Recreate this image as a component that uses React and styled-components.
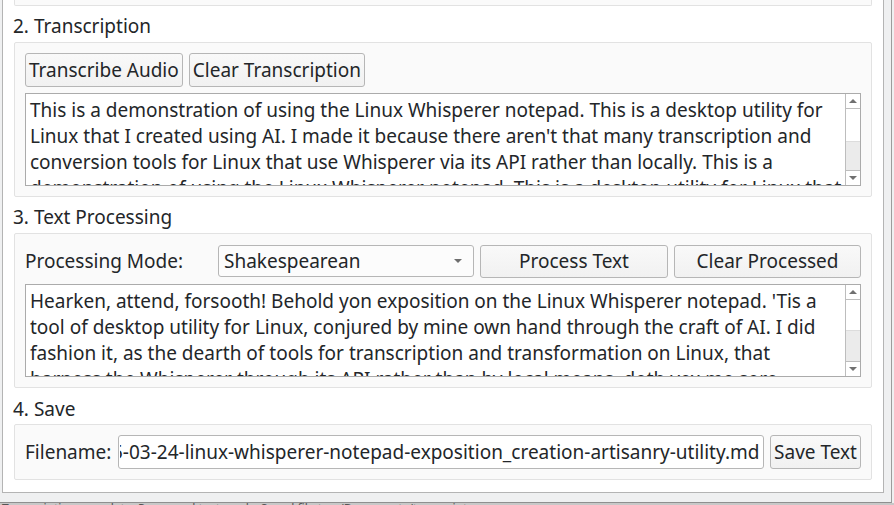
import styled, { createGlobalStyle } from 'styled-components'
import { useEffect, useRef } from 'react'

const GlobalStyle = createGlobalStyle`
  html, body {
    margin: 0;
    padding: 0;
    background: #eff0f1;
    overflow: hidden;
  }
  body {
    font-family: 'Noto Sans', 'DejaVu Sans', sans-serif;
    color: #232629;
  }
`

const Screen = styled.div`
  width: 894px;
  height: 505px;
  display: flex;
  flex-direction: column;
  overflow: hidden;
`

const Frame = styled.div`
  width: 892px;
  height: 503px;
  border-right: 1px solid #9c9c9c;
  border-bottom: 1px solid #8f8f8f;
  box-sizing: border-box;
  display: flex;
  flex-direction: column;
`

const Window = styled.div`
  margin-left: 2px;
  width: 882px;
  height: 493px;
  box-sizing: border-box;
  background: #ffffff;
  border: 1px solid #b4b4b4;
  border-top: none;
  padding: 0 11px 9px 11px;
  display: flex;
  flex-direction: column;
`

const PrevGroup = styled.div`
  height: 6px;
  box-sizing: border-box;
  background: #fafafa;
  border: 1px solid #e2e2e2;
  border-top: none;
  border-radius: 0 0 2px 2px;
`

const SectionTitle = styled.div`
  height: 36px;
  box-sizing: border-box;
  padding-top: ${(p) => p.pt || 7}px;
  margin-left: -1px;
  font-size: 19px;
  line-height: 26px;
`

const Group = styled.div`
  background: #fafafa;
  border: 1px solid #e2e2e2;
  border-radius: 2px;
  padding: 10px;
  display: flex;
  flex-direction: column;
  gap: 6px;
`

const Row = styled.div`
  display: flex;
  align-items: center;
  gap: 6px;
  height: 34px;
`

const Button = styled.button`
  height: ${(p) => p.h || 34}px;
  width: ${(p) => (p.w ? p.w + 'px' : 'auto')};
  box-sizing: border-box;
  padding: 0 3px;
  font-family: inherit;
  font-size: 19px;
  color: #232629;
  background: linear-gradient(#f9f9f9, #f1f1f1);
  border: 1px solid #b6b6b6;
  border-radius: 3px;
  white-space: nowrap;
  flex-shrink: 0;
`

const Label = styled.span`
  font-size: 19px;
  line-height: 26px;
  width: ${(p) => (p.w ? p.w + 'px' : 'auto')};
  margin-right: ${(p) => p.mr || 0}px;
  flex-shrink: 0;
  white-space: nowrap;
`

const Combo = styled.div`
  width: 256px;
  height: 32px;
  box-sizing: border-box;
  background: #fcfcfc;
  border: 1px solid #b6b6b6;
  border-radius: 3px;
  display: flex;
  align-items: center;
  justify-content: space-between;
  padding: 0 11px 0 5px;
  font-size: 19px;
  flex-shrink: 0;
`

const Caret = styled.span`
  width: 0;
  height: 0;
  border-left: 4px solid transparent;
  border-right: 4px solid transparent;
  border-top: 4px solid #6e6e6e;
`

const TextBox = styled.div`
  height: 93px;
  box-sizing: border-box;
  background: #ffffff;
  border: 1px solid #ababab;
  display: flex;
  overflow: hidden;
`

const TextLines = styled.div`
  flex: 1;
  padding: 3px 4px;
  font-size: 19px;
  line-height: 26px;
  overflow: hidden;
`

const Line = styled.div`
  white-space: nowrap;
`

const ScrollBar = styled.div`
  width: 15px;
  box-sizing: border-box;
  border-left: 1px solid #bdbdbd;
  display: flex;
  flex-direction: column;
  background: #ffffff;
`

const ScrollArrow = styled.div`
  height: 15px;
  box-sizing: border-box;
  display: flex;
  align-items: center;
  justify-content: center;
  border-${(p) => (p.up ? 'bottom' : 'top')}: 1px solid #bdbdbd;
  &::after {
    content: '';
    border-left: 4px solid transparent;
    border-right: 4px solid transparent;
    border-${(p) => (p.up ? 'bottom' : 'top')}: 4px solid #707070;
  }
`

const Track = styled.div`
  flex: 1;
  display: flex;
  flex-direction: column;
  justify-content: flex-end;
`

const Thumb = styled.div`
  height: ${(p) => p.h}px;
  background: #ebebeb;
  border-top: 1px solid #dcdcdc;
`

const FileInput = styled.input`
  flex: 1;
  min-width: 0;
  height: 34px;
  box-sizing: border-box;
  background: #ffffff;
  border: 1px solid #b6b6b6;
  border-radius: 3px;
  padding: 0 4px 0 1px;
  font-family: inherit;
  font-size: 19px;
  color: #232629;
  outline: none;
`

const StatusStrip = styled.div`
  height: 2px;
  overflow: hidden;
  background: #c8c8c8;
  font-size: 12px;
  line-height: 12px;
  padding-left: 2px;
  color: #555;
  white-space: nowrap;
`

const transcription = [
  'This is a demonstration of using the Linux Whisperer notepad. This is a desktop utility for',
  "Linux that I created using AI. I made it because there aren't that many transcription and",
  'conversion tools for Linux that use Whisperer via its API rather than locally. This is a',
  'demonstration of using the Linux Whisperer notepad. This is a desktop utility for Linux that',
]

const processed = [
  "Hearken, attend, forsooth! Behold yon exposition on the Linux Whisperer notepad. 'Tis a",
  'tool of desktop utility for Linux, conjured by mine own hand through the craft of AI. I did',
  'fashion it, as the dearth of tools for transcription and transformation on Linux, that',
  'harness the Whisperer through its API rather than by local means, doth vex me sore.',
]

const TextView = ({ lines, thumb }) => (
  <TextBox>
    <TextLines>
      {lines.map((l, i) => (
        <Line key={i}>{l}</Line>
      ))}
    </TextLines>
    <ScrollBar>
      <ScrollArrow up />
      <Track>
        <Thumb h={thumb} />
      </Track>
      <ScrollArrow />
    </ScrollBar>
  </TextBox>
)

const App = () => {
  const fileRef = useRef(null)

  // keep the end of the filename in view, like the native line edit does
  useEffect(() => {
    if (fileRef.current) fileRef.current.scrollLeft = fileRef.current.scrollWidth
  }, [])

  return (
    <Screen>
      <GlobalStyle />
      <Frame>
        <Window>
          <PrevGroup />

          <SectionTitle>2. Transcription</SectionTitle>
          <Group>
            <Row>
              <Button>Transcribe Audio</Button>
              <Button>Clear Transcription</Button>
            </Row>
            <TextView lines={transcription} thumb={28} />
          </Group>

          <SectionTitle>3. Text Processing</SectionTitle>
          <Group>
            <Row>
              <Label w={187}>Processing Mode:</Label>
              <Combo>
                Shakespearean
                <Caret />
              </Combo>
              <Button h={33} w={188}>Process Text</Button>
              <Button h={33} w={187}>Clear Processed</Button>
            </Row>
            <TextView lines={processed} thumb={30} />
          </Group>

          <SectionTitle pt={8}>4. Save</SectionTitle>
          <Group>
            <Row>
              <Label mr={1}>Filename:</Label>
              <FileInput
                ref={fileRef}
                readOnly
                defaultValue="2025-03-24-linux-whisperer-notepad-exposition_creation-artisanry-utility.md"
              />
              <Button w={91}>Save Text</Button>
            </Row>
          </Group>
        </Window>
      </Frame>
      <StatusStrip>
        Transcription complete. Processed text ready. Saved file to ~/Documents/transcripts
      </StatusStrip>
    </Screen>
  )
}

export default App
